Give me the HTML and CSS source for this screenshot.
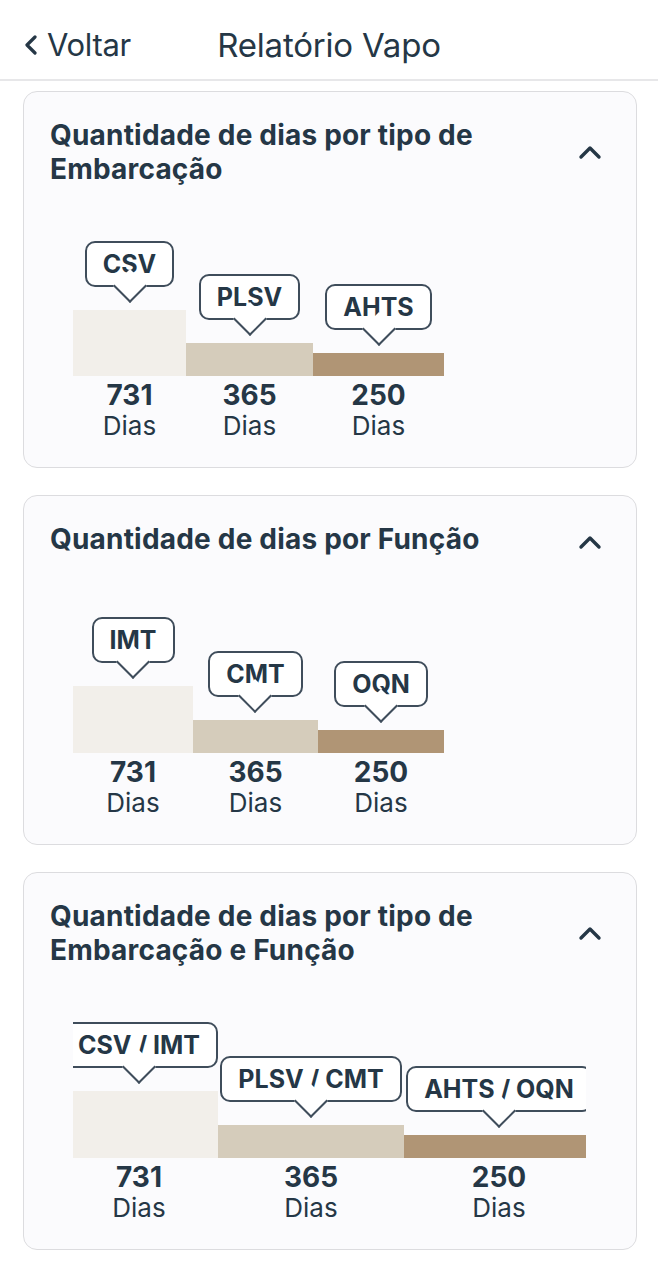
FILE: index.html
```html
<!DOCTYPE html>
<html>
<head>
  <title>Relatório Vapo</title>
  <link rel="stylesheet" href="styles.css">
</head>
<body>
  <header class="topbar">
    <a class="back" href="#">
      <svg class="back-icon" width="14" height="20" viewBox="0 0 14 20">
        <path d="M11 2 L3 10 L11 18" fill="none" stroke="#253746" stroke-width="3.2" stroke-linecap="round" stroke-linejoin="round"/>
      </svg>
      <span>Voltar</span>
    </a>
    <h1 class="page-title">Relatório Vapo</h1>
    <span></span>
  </header>

  <main class="reports">
    <section class="card">
      <div class="card-head">
        <h2 class="card-title">Quantidade de dias por tipo de Embarcação</h2>
        <button class="toggle" aria-label="Recolher">
          <svg width="32" height="40" viewBox="0 0 32 40"><path d="M7 25 L16 16 L25 25" fill="none" stroke="#253746" stroke-width="3.4" stroke-linecap="round" stroke-linejoin="round"/></svg>
        </button>
      </div>
      <div class="chart">
        <div class="chart-row">
          <div class="col" style="width: 113px">
            <div class="tip">CSV</div>
            <div class="bar bar-1" style="height: 66px"></div>
            <div class="value">731</div>
            <div class="unit">Dias</div>
          </div>
          <div class="col" style="width: 127px">
            <div class="tip">PLSV</div>
            <div class="bar bar-2" style="height: 33px"></div>
            <div class="value">365</div>
            <div class="unit">Dias</div>
          </div>
          <div class="col" style="width: 131px">
            <div class="tip">AHTS</div>
            <div class="bar bar-3" style="height: 23px"></div>
            <div class="value">250</div>
            <div class="unit">Dias</div>
          </div>
        </div>
      </div>
    </section>

    <section class="card">
      <div class="card-head">
        <h2 class="card-title">Quantidade de dias por Função</h2>
        <button class="toggle" aria-label="Recolher">
          <svg width="32" height="40" viewBox="0 0 32 40"><path d="M7 25 L16 16 L25 25" fill="none" stroke="#253746" stroke-width="3.4" stroke-linecap="round" stroke-linejoin="round"/></svg>
        </button>
      </div>
      <div class="chart">
        <div class="chart-row">
          <div class="col" style="width: 120px">
            <div class="tip">IMT</div>
            <div class="bar bar-1" style="height: 67px"></div>
            <div class="value">731</div>
            <div class="unit">Dias</div>
          </div>
          <div class="col" style="width: 125px">
            <div class="tip">CMT</div>
            <div class="bar bar-2" style="height: 33px"></div>
            <div class="value">365</div>
            <div class="unit">Dias</div>
          </div>
          <div class="col" style="width: 126px">
            <div class="tip">OQN</div>
            <div class="bar bar-3" style="height: 23px"></div>
            <div class="value">250</div>
            <div class="unit">Dias</div>
          </div>
        </div>
      </div>
    </section>

    <section class="card">
      <div class="card-head">
        <h2 class="card-title">Quantidade de dias por tipo de Embarcação e Função</h2>
        <button class="toggle" aria-label="Recolher">
          <svg width="32" height="40" viewBox="0 0 32 40"><path d="M7 25 L16 16 L25 25" fill="none" stroke="#253746" stroke-width="3.4" stroke-linecap="round" stroke-linejoin="round"/></svg>
        </button>
      </div>
      <div class="chart chart-wide">
        <div class="chart-row">
          <div class="col" style="width: 158px">
            <div class="tip">CSV / IMT</div>
            <div class="bar bar-1" style="height: 67px"></div>
            <div class="value">731</div>
            <div class="unit">Dias</div>
          </div>
          <div class="col" style="width: 186px">
            <div class="tip">PLSV / CMT</div>
            <div class="bar bar-2" style="height: 33px"></div>
            <div class="value">365</div>
            <div class="unit">Dias</div>
          </div>
          <div class="col" style="width: 190px">
            <div class="tip">AHTS / OQN</div>
            <div class="bar bar-3" style="height: 23px"></div>
            <div class="value">250</div>
            <div class="unit">Dias</div>
          </div>
        </div>
      </div>
    </section>
  </main>
</body>
</html>
```

FILE: styles.css
```css
body {
  margin: 0;
  background: #fff;
  color: #253746;
  font-family: Inter, "Noto Sans", sans-serif;
}
.topbar {
  display: grid;
  grid-template-columns: 1fr auto 1fr;
  align-items: center;
  height: 69px;
  padding-top: 10px;
  border-bottom: 2px solid #e7e7e9;
}
.back {
  display: flex;
  align-items: center;
  gap: 9px;
  padding-left: 24px;
  color: #253746;
  text-decoration: none;
  font-size: 31px;
  letter-spacing: -0.3px;
}
.page-title {
  margin: 0;
  font-size: 33px;
  font-weight: 400;
  letter-spacing: -0.2px;
}
.reports {
  display: flex;
  flex-direction: column;
  gap: 27px;
  padding: 10px 21px 20px 23px;
}
.card {
  background: #fbfbfd;
  border: 1.5px solid #dcdcdf;
  border-radius: 14px;
  padding: 26px 27px 26px 26px;
}
.card-head {
  display: flex;
  justify-content: space-between;
  align-items: center;
  min-height: 40px;
}
.card-title {
  align-self: flex-start;
  margin: 0;
  max-width: 500px;
  font-size: 28px;
  line-height: 34px;
  font-weight: 700;
  letter-spacing: 0.2px;
}
.toggle {
  border: none;
  background: none;
  padding: 0;
  margin-right: 3px;
  cursor: pointer;
}
.toggle svg {
  display: block;
}
.chart {
  margin: 55px 0 0 23px;
  width: 513px;
  overflow: hidden;
}
.chart-row {
  display: flex;
  align-items: flex-end;
}
.chart-wide .chart-row {
  margin-left: -13px;
}
.col {
  flex: none;
  display: flex;
  flex-direction: column;
  align-items: center;
}
.tip {
  position: relative;
  white-space: nowrap;
  padding: 0 16px;
  height: 42px;
  line-height: 42px;
  font-size: 25px;
  font-weight: 700;
  background: #fff;
  border: 2px solid #3f4d5b;
  border-radius: 10px;
  margin-bottom: 23px;
}
.tip::after {
  content: "";
  position: absolute;
  left: 50%;
  bottom: -13px;
  width: 22px;
  height: 22px;
  margin-left: -12px;
  background: #fff;
  border-right: 2px solid #3f4d5b;
  border-bottom: 2px solid #3f4d5b;
  transform: rotate(45deg);
}
.bar {
  align-self: stretch;
}
.bar-1 {
  background: #f2efea;
}
.bar-2 {
  background: #d5ccbb;
}
.bar-3 {
  background: #b09575;
}
.value {
  margin-top: 3px;
  font-size: 28px;
  line-height: 32px;
  font-weight: 700;
}
.unit {
  font-size: 26px;
  line-height: 30px;
}
```
